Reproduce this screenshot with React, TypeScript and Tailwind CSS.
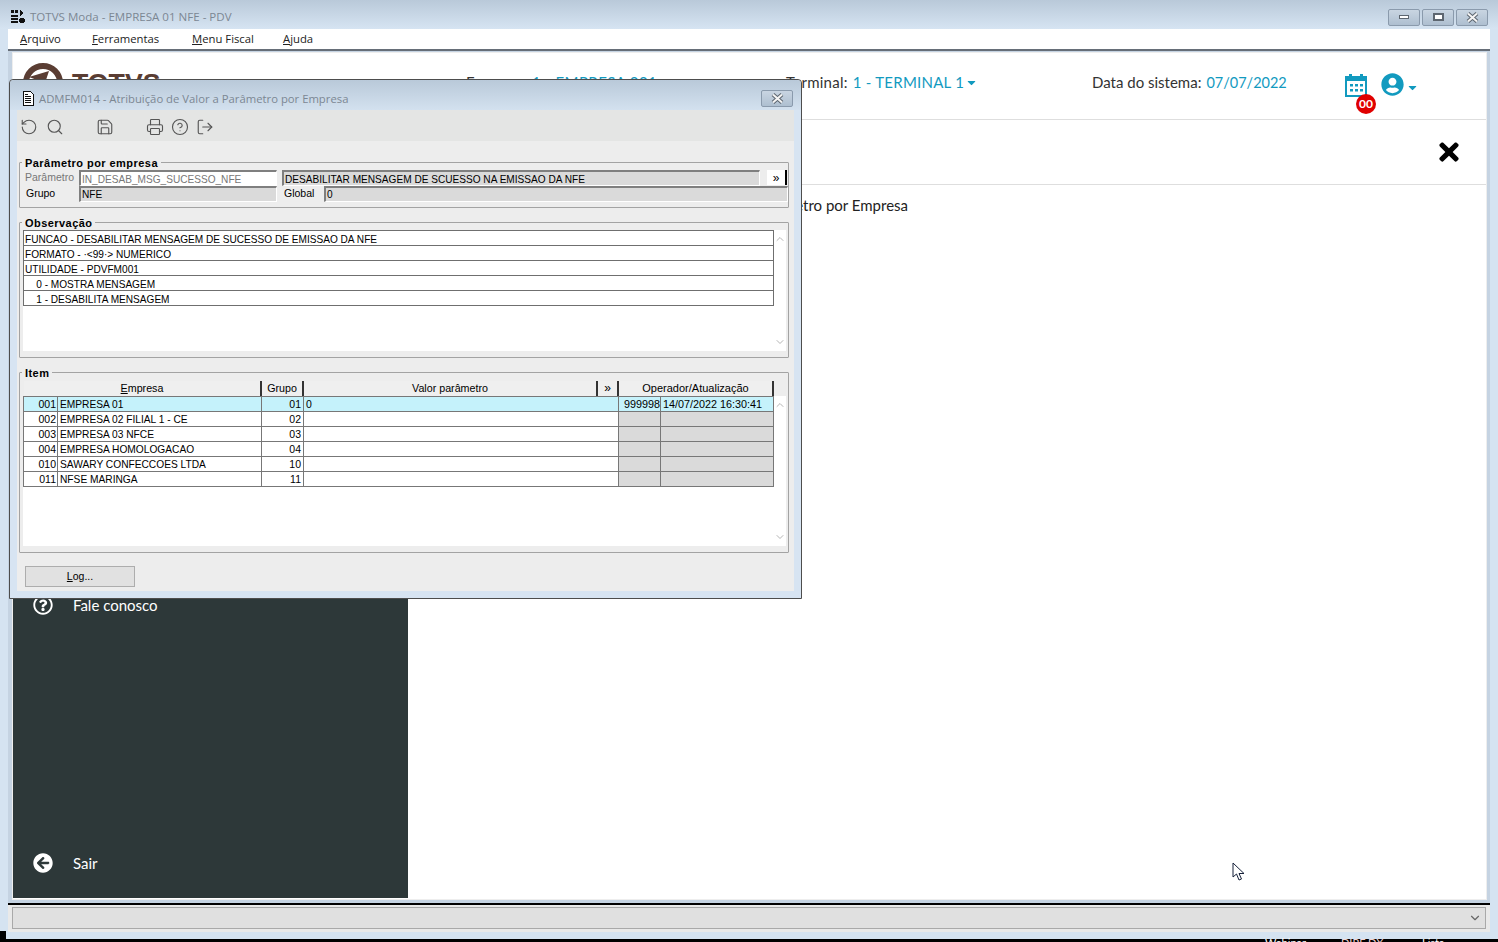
import type { ReactNode } from "react"
import { RotateCcw, Search, Save, Printer, CircleHelp, LogOut, ChevronUp, ChevronDown } from "lucide-react"
import { FaTimes, FaUserCircle, FaArrowCircleLeft, FaRegQuestionCircle, FaCaretDown } from "react-icons/fa"

const obs = [
  "FUNCAO - DESABILITAR MENSAGEM DE SUCESSO DE EMISSAO DA NFE",
  "FORMATO - ·<99·> NUMERICO",
  "UTILIDADE - PDVFM001",
  "    0 - MOSTRA MENSAGEM",
  "    1 - DESABILITA MENSAGEM",
]

const items = [
  ["001", "EMPRESA 01", "01"],
  ["002", "EMPRESA 02 FILIAL 1 - CE", "02"],
  ["003", "EMPRESA 03 NFCE", "03"],
  ["004", "EMPRESA HOMOLOGACAO", "04"],
  ["010", "SAWARY CONFECCOES LTDA", "10"],
  ["011", "NFSE MARINGA", "11"],
]

function WinButton({ children }: { children: ReactNode }) {
  return (
    <div className="flex h-[17px] w-[32px] items-center justify-center rounded-[2px] border border-[#8a9aac] bg-gradient-to-b from-[#c9d5e2] to-[#aebfd0]">
      {children}
    </div>
  )
}

function CloseGlyph() {
  return (
    <svg width="13" height="11" viewBox="0 0 13 11">
      <path d="M2 1.500 L11 9.500 M11 1.500 L2 9.500" stroke="#5d6670" strokeWidth="4" />
      <path d="M2 1.500 L11 9.500 M11 1.500 L2 9.500" stroke="#f4f4f4" strokeWidth="2" />
    </svg>
  )
}

function Fieldset({ title, className, children }: { title: string; className: string; children?: ReactNode }) {
  return (
    <div className={`relative mr-[5px] ml-[2px] rounded-[1px] border border-[#a3a3a3] ${className}`}>
      <div className="absolute -top-[7px] left-[2px] bg-[#ededed] px-[3px] text-[11px] leading-[14px] font-bold tracking-[0.45px] text-black">{title}</div>
      {children}
    </div>
  )
}

function Field({ className, children }: { className: string; children?: ReactNode }) {
  return (
    <div className={`truncate border-t-2 border-l-2 border-t-[#7f7f7f] border-l-[#7f7f7f] border-r border-b border-r-white border-b-white pl-[1px] text-[10.1px] ${className}`}>
      {children}
    </div>
  )
}

function Scroll({ className }: { className: string }) {
  return (
    <div className={`flex w-[12px] flex-col items-center justify-between bg-white ${className}`}>
      <ChevronUp size={12} className="text-[#b5b5b5]" strokeWidth={2} />
      <ChevronDown size={12} className="text-[#b5b5b5]" strokeWidth={2} />
    </div>
  )
}

function Dialog() {
  return (
    <div className="absolute top-[79px] left-[9px] z-10 h-[520px] w-[793px] rounded-t-[4px] border border-[#4d4d4d] bg-[#d7e4f2] font-['Liberation_Sans',sans-serif]">
      <div className="flex h-[30px] items-center justify-between rounded-t-[4px] bg-gradient-to-b from-[#b9c9d9] to-[#d3e1ef] pt-[6px] pr-[8px] pl-[11px]">
        <div className="flex items-center gap-[4px]">
          <svg width="14" height="16" viewBox="0 0 14 16" shapeRendering="crispEdges">
            <path d="M2 1h7l3 3v11H2z" fill="#fff" stroke="#111" />
            <path d="M4 4h3v1H4zM4 6h6v1H4zM4 8h6v1H4zM4 10h6v1H4zM4 12h6v1H4z" fill="#111" />
          </svg>
          <span className="mt-[3px] font-['Open_Sans',sans-serif] text-[11.3px] text-[#7c8793]">ADMFM014 - Atribuição de Valor a Parâmetro por Empresa</span>
        </div>
        <WinButton>
          <CloseGlyph />
        </WinButton>
      </div>
      <div className="mx-[7px] h-[481px] bg-[#ededed]">
        <div className="flex h-[31px] items-center bg-[#e4e5e4] pt-[2px] pl-[3px] text-[#555]">
          <RotateCcw size={18} strokeWidth={1.5} />
          <Search size={18} strokeWidth={1.5} className="ml-[8px]" />
          <Save size={18} strokeWidth={1.5} className="ml-[32px]" />
          <Printer size={18} strokeWidth={1.5} className="ml-[32px]" />
          <CircleHelp size={18} strokeWidth={1.5} className="ml-[7px]" />
          <LogOut size={18} strokeWidth={1.5} className="ml-[7px]" />
        </div>

        <Fieldset title="Parâmetro por empresa" className="mt-[21px] h-[46px]">
          <div className="flex h-[16px] items-start pt-[7px] text-[10.5px]">
            <span className="w-[59px] pl-[5px] leading-[14px] text-[#777]">Parâmetro</span>
            <Field className="h-[16px] w-[198px] bg-white leading-[16px] text-[#777]">IN_DESAB_MSG_SUCESSO_NFE</Field>
            <Field className="ml-[5px] h-[16px] w-[478px] bg-[#dadada] leading-[16px] text-black">DESABILITAR MENSAGEM DE SCUESSO NA EMISSAO DA NFE</Field>
            <div className="ml-[7px] flex h-[15px] w-[20px] items-center justify-center border-r-2 border-r-black bg-white text-[12px] leading-none">»</div>
          </div>
          <div className="mt-[7px] flex h-[16px] items-start text-[10.5px]">
            <span className="w-[59px] pl-[6px] leading-[14px] text-black">Grupo</span>
            <Field className="h-[16px] w-[198px] bg-[#dadada] leading-[14px]">NFE</Field>
            <span className="w-[47px] pl-[7px] leading-[14px]">Global</span>
            <Field className="h-[16px] w-[464px] bg-[#dadada] leading-[14px]">0</Field>
          </div>
        </Fieldset>

        <Fieldset title="Observação" className="mt-[14px] h-[136px]">
          <div className="mt-[7px] flex h-[121px] pl-[3px]">
            <div className="w-[751px] bg-white">
              <div className="border-x border-t border-[#6f6f6f]">
                {obs.map((line, i) => (
                  <div key={i} className="h-[15px] border-b border-[#6f6f6f] pt-[1px] pl-[1px] text-[10.1px] leading-[15px] whitespace-pre text-black">
                    {line}
                  </div>
                ))}
              </div>
            </div>
            <Scroll className="py-[3px]" />
          </div>
        </Fieldset>

        <Fieldset title="Item" className="mt-[14px] h-[181px]">
          <div className="mt-[8px] ml-[4px] flex h-[15px] w-[750px] text-center text-[10.7px] leading-[15px] text-black">
            <div className="w-[238px] border-r-2 border-r-[#333] bg-[#efefef]"><u>E</u>mpresa</div>
            <div className="w-[42px] border-r-2 border-r-[#333] bg-[#efefef]">Grupo</div>
            <div className="w-[294px] border-r-2 border-r-[#333] bg-[#efefef]">Valor parâmetro</div>
            <div className="w-[21px] border-r-2 border-r-[#333] bg-[#efefef] text-[12px]">»</div>
            <div className="w-[155px] border-r-2 border-r-[#333] bg-[#efefef] text-[11px]">Operador/Atualização</div>
          </div>
          <div className="ml-[3px] flex h-[150px] w-[763px]">
            <div className="w-[751px] bg-white">
              <div className="border-x border-t border-[#777]">
                {items.map((row, i) => {
                  const sel = i === 0
                  return (
                    <div key={row[0]} className={`flex h-[15px] border-b border-[#777] text-[10.5px] leading-[14px] text-black ${sel ? "bg-[#c5f2fb]" : "bg-white"}`}>
                      <div className="w-[34px] border-r border-[#777] pr-[1px] text-right">{row[0]}</div>
                      <div className="w-[204px] truncate border-r border-[#777] pl-[2px] text-[10.2px] leading-[15px]">{row[1]}</div>
                      <div className="w-[42px] border-r border-[#777] pr-[2px] text-right">{row[2]}</div>
                      <div className="w-[315px] border-r border-[#777] pl-[2px]">{sel ? "0" : ""}</div>
                      <div className={`w-[42px] border-r border-[#777] text-right text-[10.8px] ${sel ? "" : "bg-[#dadada]"}`}>{sel ? "999998" : ""}</div>
                      <div className={`flex-1 pl-[2px] text-[10.8px] ${sel ? "" : "bg-[#dadada]"}`}>{sel ? "14/07/2022 16:30:41" : ""}</div>
                    </div>
                  )
                })}
              </div>
            </div>
            <Scroll className="py-[3px]" />
          </div>
        </Fieldset>

        <div className="mt-[13px] ml-[8px] flex h-[21px] w-[110px] items-center justify-center border border-[#adadad] bg-[#e1e1e1] text-[10.5px] text-black">
          <span><u>L</u>og...</span>
        </div>
      </div>
    </div>
  )
}

function Header() {
  return (
    <div className="flex h-[67px] items-start border-b border-[#dedede] text-[15px] text-[#333]">
      <div className="mt-[10px] ml-[10px] flex w-[443px] items-start gap-[9px]">
        <svg width="40" height="40" viewBox="0 0 40 40">
          <circle cx="20" cy="20" r="17" fill="none" stroke="#5a3d33" strokeWidth="6" />
          <path d="M6 14 L26 8 L22 20 Z" fill="#5a3d33" />
        </svg>
        <span className="mt-[2px] font-['Liberation_Sans',sans-serif] text-[26.7px] leading-[36px] font-bold text-[#5a3d33]">TOTVS</span>
      </div>
      <div className="mt-[18px] flex w-[320px] gap-[6px]">
        <span>Empresa:</span>
        <span className="tracking-[0.4px] text-[#129abf]">1 - EMPRESA 001</span>
      </div>
      <div className="mt-[18px] flex w-[306px] items-center gap-[5px] tracking-[0.25px]">
        <span>Terminal:</span>
        <span className="text-[#129abf]">1 - TERMINAL 1</span>
        <FaCaretDown size={13} className="-ml-[4px] text-[#129abf]" />
      </div>
      <div className="mt-[18px] flex w-[253px] items-baseline gap-[5px]">
        <span>Data do sistema:</span>
        <span className="text-[14.5px] text-[#129abf]">07/07/2022</span>
      </div>
      <div className="relative mt-[20px] h-[24px] w-[36px]">
        <svg width="22" height="24" viewBox="0 0 22 24">
          <path d="M1 4h20v19H1z" fill="none" stroke="#129abf" strokeWidth="2" />
          <path d="M1 3h20v5H1z M4 1h3v4H4z M15 1h3v4h-3z" fill="#129abf" />
          <path d="M5 11h3v2.500H5z M10 11h3v2.500h-3z M15 11h3v2.500h-3z M5 16h3v2.500H5z M10 16h3v2.500h-3z M15 16h3v2.500h-3z" fill="#129abf" />
        </svg>
        <div className="absolute top-[21px] left-[11px] flex h-[20px] w-[20px] items-center justify-center rounded-full bg-[#e00000] text-[12px] leading-none font-bold text-white">00</div>
      </div>
      <FaUserCircle size={23} className="mt-[20px] text-[#129abf]" />
      <FaCaretDown size={13} className="mt-[28px] ml-[2px] text-[#129abf]" />
    </div>
  )
}

export default function App() {
  return (
    <div className="relative h-[942px] w-[1498px] overflow-hidden bg-black font-['Lato',sans-serif]">
      <div className="flex h-[939px] flex-col bg-[#d5e3f1]">
        <div className="flex h-[29px] shrink-0 items-center justify-between bg-gradient-to-b from-[#b9c9d9] to-[#d6e4f2] px-[10px] pt-[5px]">
          <div className="flex items-center gap-[4px]">
            <svg width="16" height="16" viewBox="0 0 16 16" shapeRendering="crispEdges">
              <path d="M1 1h3v3H1zM5 1h3v3H5zM10 1l4 3-4 3zM1 6h7v1.500H1zM1 9h7v1.500H1zM1 12h7v1.500H1z" fill="#111" />
              <circle cx="12" cy="11.500" r="3" fill="#111" />
            </svg>
            <span className="font-['Open_Sans',sans-serif] text-[11.55px] text-[#7c8793]">TOTVS Moda - EMPRESA 01 NFE - PDV</span>
          </div>
          <div className="flex gap-[2px]">
            <WinButton>
              <div className="h-[4px] w-[10px] border border-[#5d6670] bg-white" />
            </WinButton>
            <WinButton>
              <div className="h-[8px] w-[11px] border-2 border-[#5d6670] bg-white" />
            </WinButton>
            <WinButton>
              <CloseGlyph />
            </WinButton>
          </div>
        </div>

        <div className="mx-[8px] flex h-[20px] shrink-0 items-center bg-white pl-[12px] font-['Open_Sans',sans-serif] text-[11.3px] text-[#222]">
          <span className="w-[72px]"><u>A</u>rquivo</span>
          <span className="w-[100px]"><u>F</u>erramentas</span>
          <span className="w-[91px]"><u>M</u>enu Fiscal</span>
          <span><u>A</u>juda</span>
        </div>

        <div className="mx-[8px] h-[854px] shrink-0 border-t-2 border-t-[#666e78] bg-[#c5d3e2] pt-[1px] pr-[3px] pl-[4px]">
          <div className="h-[848px] border border-[#eeeeee] bg-white">
            <Header />
            <div className="flex h-[65px] items-start justify-end border-b border-[#dedede] pt-[18px] pr-[23px] text-black">
              <FaTimes size={28} />
            </div>
            <div className="flex h-[713px]">
              <div className="flex w-[395px] flex-col justify-between bg-[#2d3839] pb-[24px] pl-[20px] text-[15px] text-white">
                <div className="mt-[409px] flex items-center gap-[20px]">
                  <FaRegQuestionCircle size={20} className="-mt-[1px]" />
                  <span>Fale conosco</span>
                </div>
                <div className="flex items-center gap-[20px]">
                  <FaArrowCircleLeft size={20} />
                  <span>Sair</span>
                </div>
              </div>
              <div className="w-[500px] pt-[9px] text-right text-[15px] text-[#222]">Atribuição de Valor a Parâmetro por Empresa</div>
            </div>
          </div>
        </div>

        <div className="mx-[8px] h-[29px] shrink-0 border-t-2 border-t-black bg-[#e9e9e9] px-[4px] pt-[2px]">
          <div className="flex h-[22px] items-center justify-end border border-[#a9a9a9] bg-[#e0e0e0] pr-[3px]">
            <ChevronDown size={14} className="text-[#666]" />
          </div>
        </div>
      </div>

      <Dialog />

      <svg className="absolute top-[862px] left-[1232px]" width="14" height="20" viewBox="0 0 14 20">
        <path d="M1 1 L1 15 L4.500 12 L7 18 L9.500 17 L7 11.500 L12 11.500 Z" fill="#fff" stroke="#16213a" strokeWidth="1" />
      </svg>
      <div className="absolute top-[931px] left-0 h-[11px] w-[6px] bg-black" />
      <div className="absolute top-[936px] left-[1265px] flex text-[11px] leading-[13px] text-white">
        <span className="w-[76px]">Webinar</span>
        <span className="w-[81px] text-[#f3d4d4]">DIRF DX</span>
        <span>Lista</span>
      </div>
    </div>
  )
}
